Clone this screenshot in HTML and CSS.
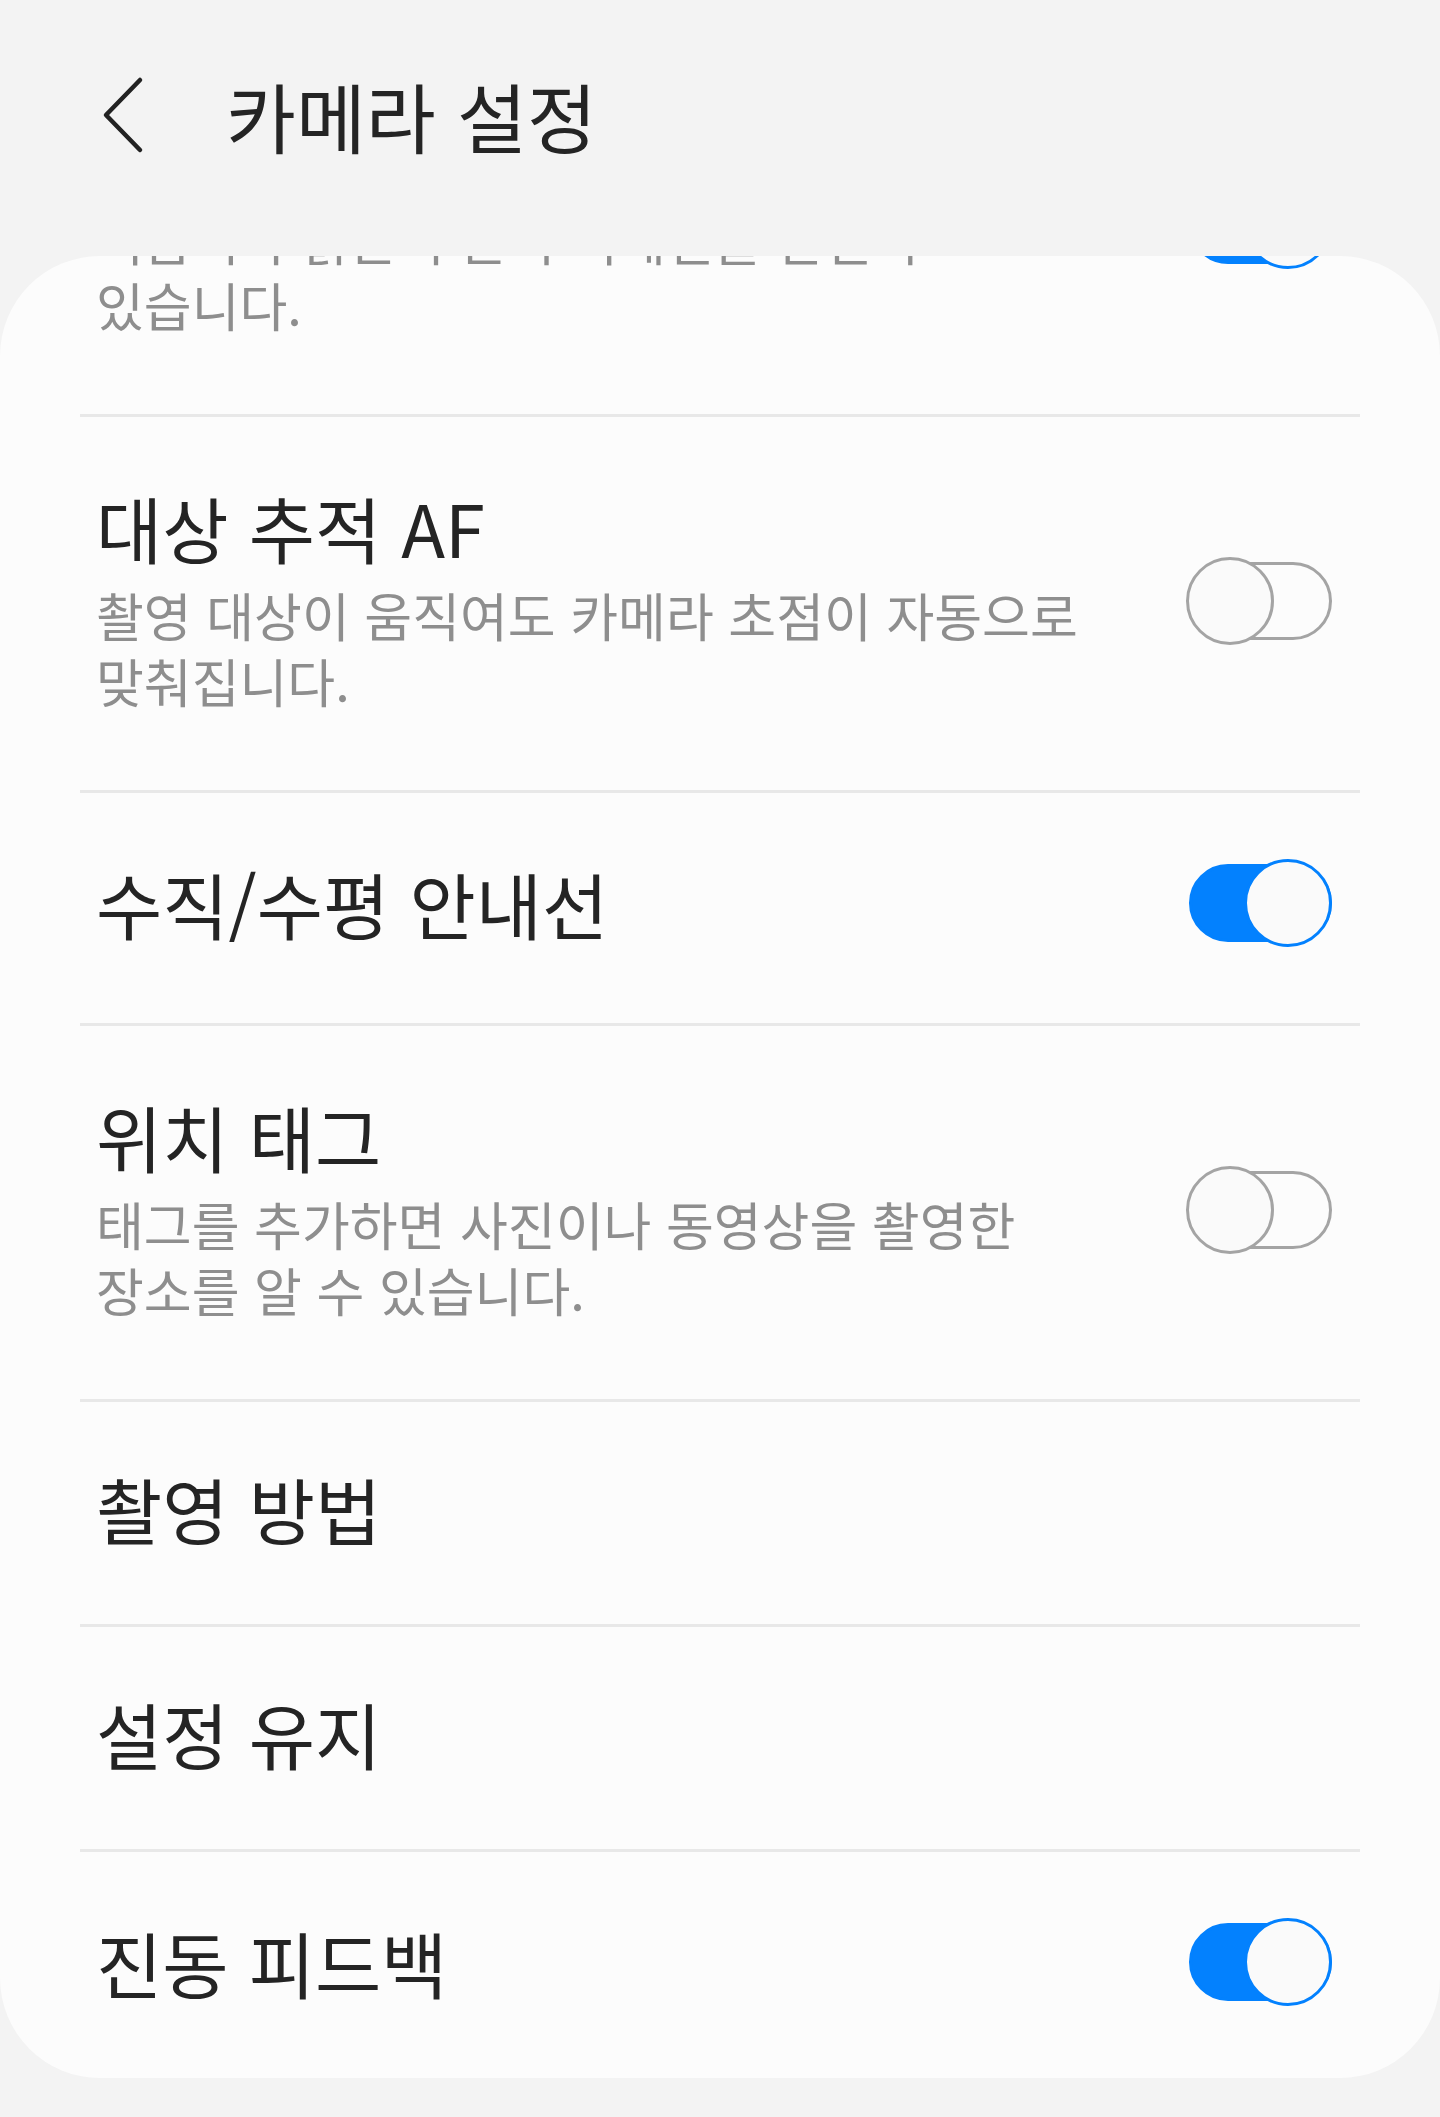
FILE: index.html
```html
<!DOCTYPE html>
<html lang="ko">
<head>
    <meta charset="UTF-8">
    <meta name="viewport" content="width=device-width, initial-scale=1.0">
    <title>카메라 설정</title>
    <link rel="stylesheet" href="styles.css">
</head>
<body>
    <header class="header">
        <button class="back" aria-label="뒤로">
            <svg width="46" height="80" viewBox="0 0 46 80">
                <path d="M40 5 L6 40 L40 75" fill="none" stroke="#222" stroke-width="4.5" stroke-linecap="round" stroke-linejoin="round"/>
            </svg>
        </button>
        <h1 class="page-title">카메라 설정</h1>
    </header>

    <main class="card">
        <div class="list">
            <div class="row with-desc">
                <div class="text">
                    <div class="title">자동 HDR</div>
                    <div class="desc">어둡거나 밝은 부분의 디테일을 살릴 수 있습니다.</div>
                </div>
                <span class="switch on"><span class="track"></span><span class="knob"></span></span>
            </div>

            <div class="row with-desc">
                <div class="text">
                    <div class="title">대상 추적 AF</div>
                    <div class="desc">촬영 대상이 움직여도 카메라 초점이 자동으로 맞춰집니다.</div>
                </div>
                <span class="switch"><span class="track"></span><span class="knob"></span></span>
            </div>

            <div class="row">
                <div class="text">
                    <div class="title">수직/수평 안내선</div>
                </div>
                <span class="switch on"><span class="track"></span><span class="knob"></span></span>
            </div>

            <div class="row with-desc">
                <div class="text">
                    <div class="title">위치 태그</div>
                    <div class="desc">태그를 추가하면 사진이나 동영상을 촬영한 장소를 알 수 있습니다.</div>
                </div>
                <span class="switch"><span class="track"></span><span class="knob"></span></span>
            </div>

            <div class="row">
                <div class="text">
                    <div class="title">촬영 방법</div>
                </div>
            </div>

            <div class="row">
                <div class="text">
                    <div class="title">설정 유지</div>
                </div>
            </div>

            <div class="row">
                <div class="text">
                    <div class="title">진동 피드백</div>
                </div>
                <span class="switch on"><span class="track"></span><span class="knob"></span></span>
            </div>
        </div>
    </main>
</body>
</html>
```

FILE: styles.css
```css
body {
    margin: 0;
    min-height: 2117px;
    background: #f3f3f3;
    font-family: "Noto Sans CJK KR", "Noto Sans", sans-serif;
    color: #242424;
    word-break: keep-all;
}
.header {
    height: 256px;
    box-sizing: border-box;
    padding: 0 0 26px 100px;
    display: flex;
    align-items: center;
}
.back {
    display: block;
    width: 46px;
    height: 80px;
    padding: 0;
    margin-right: 80px;
    border: none;
    background: none;
}
.back svg {
    display: block;
}
.page-title {
    margin: 0;
    font-size: 76px;
    font-weight: 400;
    line-height: 100px;
}
.card {
    display: block;
    height: 1822px;
    box-sizing: border-box;
    padding: 0 80px;
    background: #fcfcfc;
    border-radius: 100px;
    overflow: hidden;
}
.list {
    margin-top: -218px;
}
.row {
    display: flex;
    align-items: center;
    gap: 76px;
    padding: 66px 28px 76px 16px;
    border-top: 3px solid #e8e8e8;
}
.row.with-desc {
    padding-top: 70px;
}
.text {
    flex: 1;
    min-width: 0;
}
.title {
    font-size: 72px;
    line-height: 80px;
}
.desc {
    margin-top: 15px;
    font-size: 52px;
    line-height: 66px;
    color: #8e8e8e;
}
.switch {
    position: relative;
    flex-shrink: 0;
    width: 146px;
    height: 88px;
}
.track {
    position: absolute;
    top: 5px;
    left: 3px;
    right: 0;
    height: 78px;
    box-sizing: border-box;
    border: 3px solid #a4a4a4;
    border-radius: 39px;
}
.knob {
    position: absolute;
    top: 0;
    left: 0;
    width: 88px;
    height: 88px;
    box-sizing: border-box;
    border: 3px solid #a4a4a4;
    border-radius: 50%;
    background: #fafafa;
}
.switch.on .track {
    background: #0381fe;
    border-color: #0381fe;
}
.switch.on .knob {
    left: auto;
    right: 0;
    border-color: #0381fe;
}
```
